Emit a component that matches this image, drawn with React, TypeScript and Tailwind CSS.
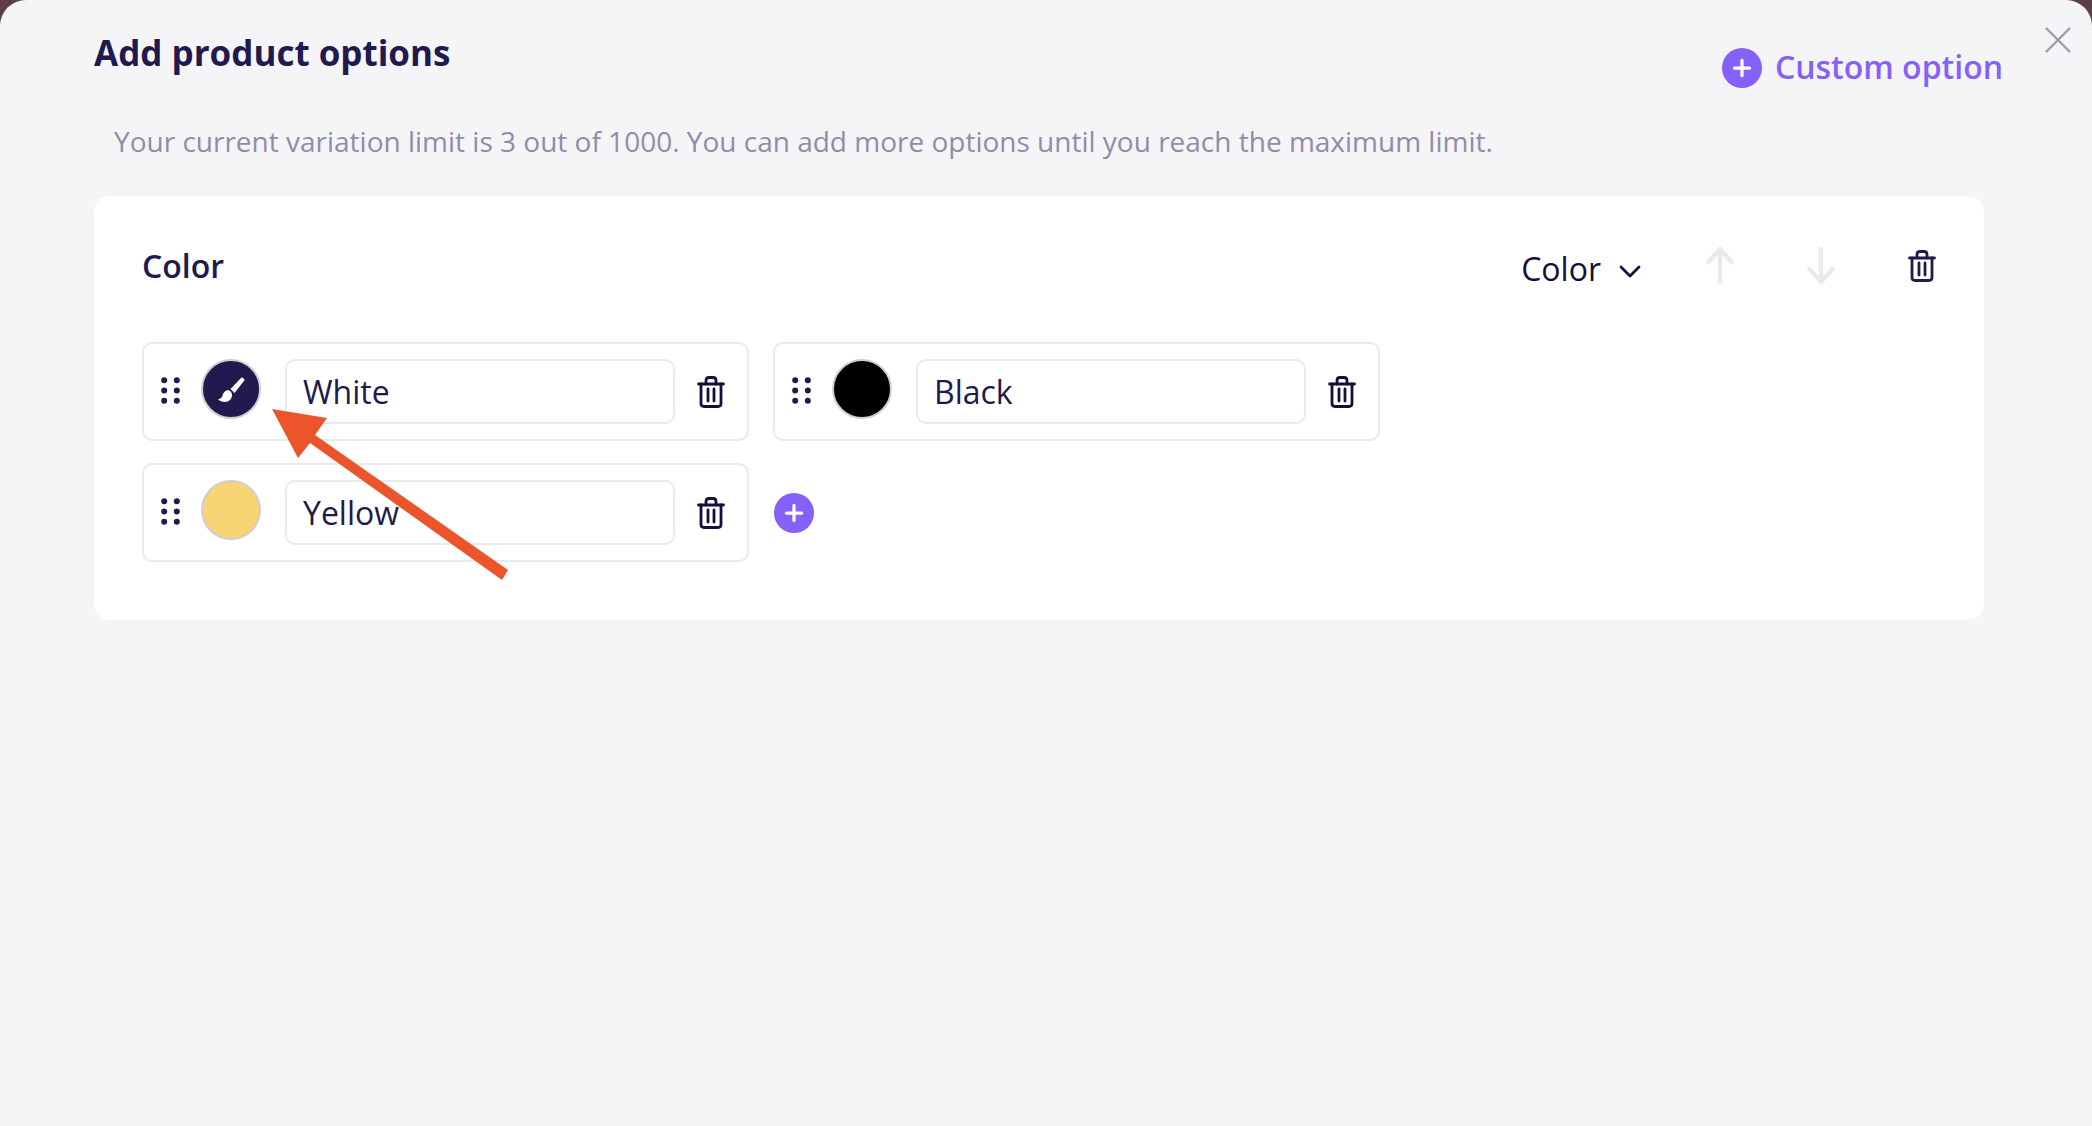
import { Plus } from "lucide-react";

const font = "font-['Open_Sans','Noto_Sans',sans-serif]";

const TrashIcon = ({ className = "" }: { className?: string }) => (
  <svg className={className} viewBox="0 0 28 32" fill="none" stroke="currentColor" strokeWidth="2.8" strokeLinecap="round" strokeLinejoin="round">
    <path d="M1.500 8h25" />
    <path d="M9 8V4.500C9 2.800 10 1.500 12 1.500h4c2 0 3 1.300 3 3V8" />
    <path d="M4 8v19.500c0 2 1 3 3 3h14c2 0 3-1 3-3V8" />
    <path d="M11 13v12M17 13v12" />
  </svg>
);

const DragDots = () => (
  <svg className="h-[27px] w-[19px] shrink-0 text-[#211a4f]" viewBox="0 0 19 27" fill="currentColor">
    <circle cx="3.2" cy="3.2" r="3" />
    <circle cx="15.8" cy="3.2" r="3" />
    <circle cx="3.2" cy="13.5" r="3" />
    <circle cx="15.8" cy="13.5" r="3" />
    <circle cx="3.2" cy="23.8" r="3" />
    <circle cx="15.8" cy="23.8" r="3" />
  </svg>
);

const BrushIcon = () => (
  <svg className="h-[27px] w-[27px]" viewBox="0 0 27 27" fill="white">
    <path d="M23.500 1.500c.8-.7 3.600 1.800 3 2.800L16.500 17l-4-4z" />
    <path d="M8.500 14.500c2.500-.8 5.500 1.500 5.500 4.500 0 4-3 7-7 7-2.300 0-4.700-.7-6.300-2-.5-.4-.3-1 .2-1 2.300-.3 3-1.500 3.800-4 .6-2.200 1.800-3.800 3.800-4.500z" />
  </svg>
);

type Option = { label: string; swatch: string; brush?: boolean };

const OptionRow = ({ option }: { option: Option }) => (
  <div className="flex h-[99px] w-[607px] items-start rounded-[10px] border-2 border-[#e9e9ef] bg-white pl-[17px]">
    <div className="mt-[33px]">
      <DragDots />
    </div>
    <div
      className={`mt-[15px] ml-[21px] flex h-[60px] w-[60px] shrink-0 items-center justify-center rounded-full border-2 border-[#cfcfd2] ${option.swatch}`}
    >
      {option.brush && <BrushIcon />}
    </div>
    <div className="mt-[15px] ml-[24px] flex h-[65px] w-[390px] shrink-0 items-center rounded-[10px] border-2 border-[#e9e9ef] pl-[16px] text-[32px] text-[#211a4f]">
      {option.label}
    </div>
    <TrashIcon className="mt-[32px] ml-[22px] h-[32px] w-[28px] shrink-0 text-[#160f3d]" />
  </div>
);

export default function App() {
  return (
    <div className={`relative h-[1126px] w-[2092px] overflow-hidden bg-[#5e3d4a] ${font}`}>
      <div className="h-full w-full rounded-t-[26px] bg-[#f5f5f8]">
        <div className="flex items-start justify-between pr-[21px] pl-[94px]">
          <h1 className="mt-[29px] text-[35px] leading-[48px] font-bold text-[#211a4f]">Add product options</h1>
          <div className="flex items-start">
            <div className="mt-[48px] flex items-center gap-[13px]">
              <span className="flex h-[40px] w-[40px] items-center justify-center rounded-full bg-[#8560fa]">
                <Plus className="h-[26px] w-[26px] text-white" strokeWidth={3} />
              </span>
              <span className="mb-[2px] text-[32px] leading-[38px] font-semibold text-[#8560fa]">Custom option</span>
            </div>
            <svg className="mt-[27px] ml-[42px] h-[26px] w-[26px] text-[#9d9bab]" viewBox="0 0 26 26" fill="none" stroke="currentColor" strokeWidth="2.4" strokeLinecap="round">
              <path d="M1.500 1.500l23 23M24.500 1.500l-23 23" />
            </svg>
          </div>
        </div>

        <p className="mt-[33px] ml-[114px] text-[28px] leading-[40px] text-[#908ca9]">
          Your current variation limit is 3 out of 1000. You can add more options until you reach the maximum limit.
        </p>

        <div className="mt-[35px] ml-[94px] h-[424px] w-[1890px] rounded-[16px] bg-white px-[48px] pt-[44px]">
          <div className="flex h-[102px] items-start justify-between">
            <h2 className="mt-[4px] text-[32px] leading-[44px] font-semibold text-[#211a4f]">Color</h2>
            <div className="flex items-start text-[#160f3d]">
              <div className="mt-[7px] flex items-center gap-[18px] text-[32px] leading-[44px]">
                Color
                <svg className="mt-[4px] h-[14px] w-[22px]" viewBox="0 0 22 14" fill="none" stroke="currentColor" strokeWidth="2.8" strokeLinecap="round" strokeLinejoin="round">
                  <path d="M2 3l9 9 9-9" />
                </svg>
              </div>
              <svg className="mt-[6px] ml-[65px] h-[38px] w-[28px] text-[#e9e9ef]" viewBox="0 0 28 38" fill="none" stroke="currentColor" strokeWidth="4.4" strokeLinecap="round" strokeLinejoin="round">
                <path d="M14 36V3M2.500 16L14 3l11.500 13" />
              </svg>
              <svg className="mt-[7px] ml-[73px] h-[38px] w-[28px] text-[#e9e9ef]" viewBox="0 0 28 38" fill="none" stroke="currentColor" strokeWidth="4.4" strokeLinecap="round" strokeLinejoin="round">
                <path d="M14 2v33M2.500 22L14 35l11.500-13" />
              </svg>
              <TrashIcon className="mt-[10px] ml-[73px] h-[32px] w-[28px] text-[#211a4f]" />
            </div>
          </div>

          <div className="flex gap-[24px]">
            <OptionRow option={{ label: "White", swatch: "bg-[#211a4f]", brush: true }} />
            <OptionRow option={{ label: "Black", swatch: "bg-black" }} />
          </div>
          <div className="mt-[22px] flex items-center gap-[25px]">
            <OptionRow option={{ label: "Yellow", swatch: "bg-[#f8d475]" }} />
            <span className="flex h-[40px] w-[40px] items-center justify-center rounded-full bg-[#8560fa]">
              <Plus className="h-[26px] w-[26px] text-white" strokeWidth={3} />
            </span>
          </div>
        </div>
      </div>

      {/* annotation drawn over the screenshot */}
      <svg className="absolute top-0 left-0 h-[1126px] w-[2092px]" viewBox="0 0 2092 1126" fill="#ec552b">
        <polygon points="272,409 327,418 315,435 508,570 502,580 310,443 298,458" />
      </svg>
    </div>
  );
}
